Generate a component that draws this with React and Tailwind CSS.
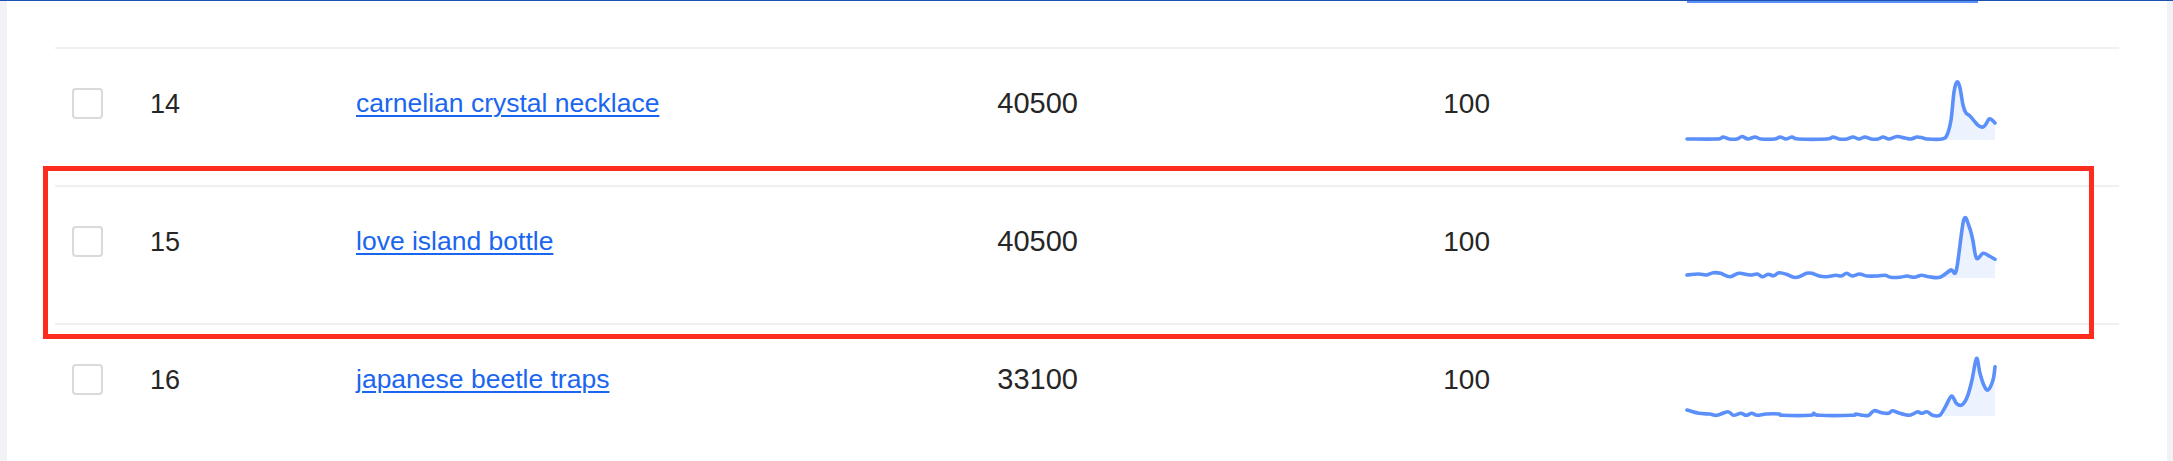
import React from 'react';

const ROWS = [
  {
    id: 14,
    keyword: 'carnelian crystal necklace',
    volume: '40500',
    score: '100',
    trend: [
      [0, 61], [30, 61], [36, 59], [42, 61], [50, 61], [55, 58.5], [61, 61], [68, 59], [74, 61],
      [88, 61], [93, 59], [99, 61], [105, 59], [111, 61], [140, 61], [146, 59], [152, 61],
      [160, 61], [166, 59], [172, 61], [178, 59], [184, 61], [191, 61], [196, 59], [202, 61],
      [210, 58.5], [218, 60], [224, 61], [230, 59], [236, 60], [240, 61], [255, 61], [260, 57],
      [264, 42], [267, 14], [270, 4], [273, 10], [276, 27], [279, 35], [283, 38], [288, 44],
      [292, 48], [296, 49], [299, 46], [302, 41], [305, 42], [308, 45],
    ],
  },
  {
    id: 15,
    keyword: 'love island bottle',
    volume: '40500',
    score: '100',
    trend: [
      [0, 59], [11.7, 58], [19, 59], [26.3, 56.7], [33.6, 57.3], [42.7, 60.7], [51.9, 57.3],
      [62.9, 59], [70.2, 58], [75.6, 60.7], [81.1, 58.3], [86.6, 59.7], [92.1, 56.7], [99.4, 58.3],
      [106.7, 61.3], [112.2, 60.7], [119.5, 57.3], [125, 57.3], [132.3, 60], [139.6, 60.7],
      [148.7, 59.3], [154.2, 60], [159.7, 57.3], [165.2, 60], [172.5, 58], [179.8, 60],
      [190.8, 60], [198.1, 59.3], [203.6, 61.3], [212.7, 61.3], [220, 60], [227.3, 61.3],
      [234.6, 59.3], [242, 60.7], [252.9, 61.3], [263.9, 54], [269.4, 54], [276.7, 4],
      [282.2, 10.7], [285.8, 24], [289.5, 42.3], [296, 37.3], [302.3, 40], [308, 43.3],
    ],
  },
  {
    id: 16,
    keyword: 'japanese beetle traps',
    volume: '33100',
    score: '100',
    trend: [
      [0, 56], [11.7, 59.3], [22.6, 60], [30, 61.3], [40.9, 57.7], [46.4, 61.3], [53.7, 59.3],
      [59.2, 61.3], [64.7, 59.3], [70.2, 61.3], [79.3, 60], [92.1, 60], [95.7, 61.3],
      [123.2, 61.3], [126.8, 59.3], [132.3, 61.3], [165.2, 61.3], [168.8, 60], [176.2, 61.3],
      [181.6, 61.3], [187.1, 56.7], [194.4, 58.7], [201.7, 59.3], [205.4, 56.7], [212.7, 59.3],
      [221.8, 61.3], [227.3, 59.3], [231, 57.7], [234.6, 59.3], [240.1, 57.7], [245.6, 61.3],
      [252.9, 61.3], [258.4, 52.7], [264.6, 42], [269.4, 49.3], [274.8, 51], [280.3, 42.7],
      [285, 26], [289.5, 4.3], [293, 19.3], [296.8, 31], [301, 36], [306, 26], [308, 12.7],
    ],
  },
];

/** Catmull-Rom -> cubic bezier, keeps the sparkline soft like the chart lib does */
function smoothPath(pts) {
  let d = `M${pts[0][0]},${pts[0][1]}`;
  for (let i = 0; i < pts.length - 1; i++) {
    const p0 = pts[i - 1] || pts[i];
    const p1 = pts[i];
    const p2 = pts[i + 1];
    const p3 = pts[i + 2] || p2;
    const c1x = p1[0] + (p2[0] - p0[0]) / 6;
    const c1y = p1[1] + (p2[1] - p0[1]) / 6;
    const c2x = p2[0] - (p3[0] - p1[0]) / 6;
    const c2y = p2[1] - (p3[1] - p1[1]) / 6;
    d += ` C${c1x.toFixed(1)},${c1y.toFixed(1)} ${c2x.toFixed(1)},${c2y.toFixed(1)} ${p2[0]},${p2[1]}`;
  }
  return d;
}

function Sparkline({ id, points }) {
  const line = smoothPath(points);
  const area = `${line} L308,62 L0,62 Z`;
  return (
    <svg width="308" height="64" viewBox="0 0 308 64" className="block overflow-visible">
      <defs>
        <clipPath id={`tail-${id}`}>
          <rect x="257" y="0" width="52" height="64" />
        </clipPath>
      </defs>
      <path d={area} fill="#edf3fe" clipPath={`url(#tail-${id})`} />
      <path d={line} fill="none" stroke="#5b8ff9" strokeWidth="3.6" strokeLinejoin="round" strokeLinecap="round" />
    </svg>
  );
}

function Row({ row }) {
  return (
    <div className="flex items-start h-[138px] border-t-2 border-[#f0f0f0]">
      <div className="w-[95px] pl-[17px] mt-[38px] h-[32px] flex items-center">
        <span className="block w-[31px] h-[31px] rounded-[4px] border-2 border-[#dadada] bg-white" />
      </div>
      <div className="w-[206px] mt-[39px] h-[32px] flex items-center text-[27px] text-[#262626]">
        {row.id}
      </div>
      <div className="w-[522px] mt-[39px] h-[32px] flex items-center">
        <a
          href="#"
          className="text-[26.5px] text-[#1a66f0] underline decoration-[1.5px] underline-offset-[3px] whitespace-nowrap"
        >
          {row.keyword}
        </a>
      </div>
      <div className="w-[200px] mt-[39px] h-[32px] flex items-center justify-end text-[29px] text-[#262626]">
        {row.volume}
      </div>
      <div className="w-[412px] mt-[39px] h-[32px] flex items-center justify-end text-[28px] text-[#262626]">
        {row.score}
      </div>
      <div className="ml-[197px] mt-[29px]">
        <Sparkline id={row.id} points={row.trend} />
      </div>
    </div>
  );
}

export default function App() {
  return (
    <div
      className="relative w-[2173px] h-[461px] overflow-hidden bg-[#f0f2f5] border-t border-[#1d50b0]"
      style={{ fontFamily: '"Liberation Sans", Arial, sans-serif' }}
    >
      <div className="ml-[7px] mr-[6px] h-full bg-white px-[48px]">
        {/* tail of the previous row, scrolled mostly out of view */}
        <div className="h-[46px]">
          <div className="ml-[1632px] w-[291px] h-[2px] bg-[#5b8ff9]" />
        </div>
        {ROWS.map((row) => (
          <Row key={row.id} row={row} />
        ))}
      </div>

      {/* annotation highlight */}
      <div className="absolute left-[43px] top-[165px] w-[2051px] h-[173px] border-[5px] border-[#fe2c1f] pointer-events-none" />
    </div>
  );
}
